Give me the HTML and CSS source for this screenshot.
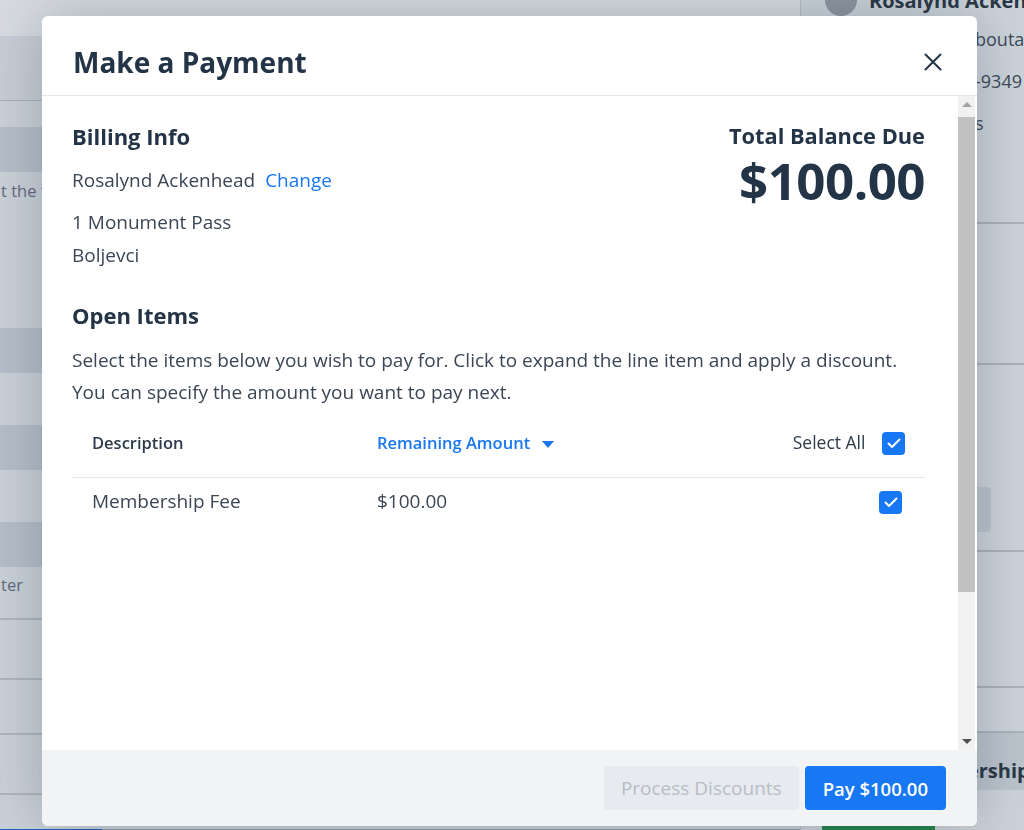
FILE: index.html
```html
<!DOCTYPE html>
<html>
    <head>
        <title>Make a Payment</title>
        <link rel="stylesheet" href="styles.css">
    </head>
    <body>
        <div class="page">
            <div class="main">
                <div class="topbar"></div>
                <div class="toolbar"></div>
                <div class="strip"></div>
                <div class="band"></div>
                <div class="notice">t the following fields before you continue</div>
                <div class="band"></div>
                <div class="strip tall"></div>
                <div class="band"></div>
                <div class="strip tall"></div>
                <div class="band"></div>
                <div class="notice short">ter</div>
                <div class="line-row"></div>
                <div class="line-row r2"></div>
                <div class="line-row r3"></div>
                <div class="line-row r4"></div>
                <div class="bottom-bar"><span class="blue-tab"></span></div>
            </div>
            <div class="sidebar">
                <div class="profile">
                    <span class="avatar"></span>
                    <span class="profile-name">Rosalynd Ackenhead</span>
                </div>
                <div class="side-line">boutads.com</div>
                <div class="side-line">-9349</div>
                <div class="side-line">s</div>
                <div class="side-gap"></div>
                <div class="side-section"></div>
                <div class="side-section s2"><span class="side-box"></span></div>
                <div class="side-section s3"></div>
                <div class="side-section s4"></div>
                <div class="side-title">Membership</div>
                <div class="side-foot"><span class="green-tab"></span></div>
            </div>
        </div>

        <div class="modal">
            <div class="modal-header">
                <h2>Make a Payment</h2>
                <span class="close">
                    <svg width="18" height="18" viewBox="0 0 18 18"><path d="M1.5 1.5 L16.5 16.5 M16.5 1.5 L1.5 16.5" stroke="#243447" stroke-width="2" stroke-linecap="round"/></svg>
                </span>
            </div>
            <div class="modal-body">
                <div class="scroll-content">
                    <div class="billing">
                        <div class="billing-info">
                            <h3>Billing Info</h3>
                            <p>Rosalynd Ackenhead <a class="link">Change</a></p>
                            <p>1 Monument Pass</p>
                            <p>Boljevci</p>
                        </div>
                        <div class="balance">
                            <h3>Total Balance Due</h3>
                            <div class="balance-amount">$100.00</div>
                        </div>
                    </div>
                    <h3 class="open-title">Open Items</h3>
                    <p class="hint">Select the items below you wish to pay for. Click to expand the line item and apply a discount.<br>You can specify the amount you want to pay next.</p>
                    <table class="items">
                        <thead>
                            <tr>
                                <th class="col-desc">Description</th>
                                <th class="col-amount sorted">Remaining Amount <span class="caret"></span></th>
                                <th class="col-check">Select All <span class="check"><svg width="14" height="11" viewBox="0 0 14 11"><path d="M1.5 5.5 L5 9 L12.5 1.5" fill="none" stroke="#fff" stroke-width="2" stroke-linecap="round" stroke-linejoin="round"/></svg></span></th>
                            </tr>
                        </thead>
                        <tbody>
                            <tr>
                                <td class="col-desc">Membership Fee</td>
                                <td class="col-amount">$100.00</td>
                                <td class="col-check"><span class="check"><svg width="14" height="11" viewBox="0 0 14 11"><path d="M1.5 5.5 L5 9 L12.5 1.5" fill="none" stroke="#fff" stroke-width="2" stroke-linecap="round" stroke-linejoin="round"/></svg></span></td>
                            </tr>
                        </tbody>
                    </table>
                </div>
                <div class="scrollbar">
                    <span class="arrow up"></span>
                    <span class="thumb"></span>
                    <span class="arrow down"></span>
                </div>
            </div>
            <div class="modal-footer">
                <button class="btn btn-muted">Process Discounts</button>
                <button class="btn btn-primary">Pay $100.00</button>
            </div>
        </div>
    </body>
</html>
```

FILE: styles.css
```css
body {
    margin: 0;
    overflow: hidden;
    font-family: "Open Sans", "Noto Sans", sans-serif;
    background: #c9d0d7;
}

/* page behind the dialog, already dimmed */
.page {
    display: flex;
    height: 830px;
}
.main {
    width: 800px;
    flex-shrink: 0;
    display: flex;
    flex-direction: column;
    background: #cbd1d8;
}
.topbar {
    height: 36px;
    background: #d8dce1;
}
.toolbar {
    height: 64px;
    background: #c8ced6;
    border-bottom: 1px solid #a9b1bb;
}
.strip {
    height: 26px;
}
.strip.tall {
    height: 52px;
}
.band {
    height: 45px;
    background: #b6bfc9;
}
.notice {
    height: 156px;
    padding: 7px 0 0 1px;
    box-sizing: border-box;
    font-size: 16.5px;
    color: #6a6580;
    white-space: nowrap;
}
.notice.short {
    height: 51px;
    padding-top: 6px;
    color: #5e6b7c;
}
.line-row {
    height: 58px;
    border-top: 2px solid #aeb6c0;
}
.line-row.r2 {
    height: 53px;
}
.line-row.r3 {
    height: 58px;
}
.line-row.r4 {
    height: 34px;
}
.bottom-bar {
    flex: 1;
    background: #9ba4ae;
}
.blue-tab {
    display: block;
    width: 102px;
    height: 100%;
    background: #1d60c2;
}

.sidebar {
    flex: 1;
    min-width: 0;
    overflow: hidden;
    display: flex;
    flex-direction: column;
    background: #cdd3da;
    border-left: 1px solid #b7bfc8;
    color: #3f4a58;
}
.profile {
    display: flex;
    align-items: center;
    gap: 12px;
    margin-top: -18px;
    padding-left: 24px;
    height: 36px;
    white-space: nowrap;
}
.avatar {
    flex-shrink: 0;
    width: 32px;
    height: 32px;
    border-radius: 50%;
    background: #8e97a2;
}
.profile-name {
    font-size: 20px;
    font-weight: 700;
    color: #2b3846;
}
.side-line {
    height: 42px;
    line-height: 42px;
    padding-left: 174px;
    font-size: 18px;
    white-space: nowrap;
}
.side-gap {
    height: 78px;
}
.side-section {
    height: 139px;
    border-top: 2px solid #aab2bc;
}
.side-section.s2 {
    height: 187px;
    display: flex;
    align-items: flex-end;
    padding: 0 0 18px 160px;
    box-sizing: border-box;
}
.side-box {
    width: 30px;
    height: 45px;
    border-radius: 4px;
    background: #bcc4cd;
}
.side-section.s3 {
    height: 134px;
}
.side-section.s4 {
    height: 43px;
}
.side-title {
    height: 59px;
    box-sizing: border-box;
    padding: 18px 0 0 103px;
    line-height: 40px;
    border-top: 2px solid #aab2bc;
    background: #bcc4cd;
    font-size: 20px;
    font-weight: 700;
    color: #2b3846;
    white-space: nowrap;
}
.side-foot {
    flex: 1;
    padding-left: 21px;
}
.green-tab {
    display: block;
    width: 113px;
    height: 100%;
    background: #23844e;
}

/* dialog */
.modal {
    position: fixed;
    left: 42px;
    top: 16px;
    width: 935px;
    height: 810px;
    display: flex;
    flex-direction: column;
    background: #fff;
    border-radius: 6px;
    overflow: hidden;
    box-shadow: 0 0 60px rgba(30, 45, 65, 0.28);
    color: #243447;
}
.modal-header {
    height: 67px;
    flex-shrink: 0;
    display: flex;
    align-items: center;
    justify-content: space-between;
    padding: 12px 35px 0 31px;
    border-bottom: 1px solid #e3e6ea;
}
.modal-header h2 {
    margin: 0;
    font-size: 28px;
    font-weight: 700;
}
.close {
    display: flex;
    cursor: pointer;
}

.modal-body {
    flex: 1;
    display: flex;
    min-height: 0;
}
.scroll-content {
    flex: 1;
    padding: 22px 33px 0 30px;
}
h3 {
    margin: 0;
    font-size: 22px;
    font-weight: 700;
    line-height: 36px;
}
.billing {
    display: flex;
    justify-content: space-between;
}
.billing-info h3 {
    margin-bottom: 10px;
}
.billing-info p {
    margin: 0;
    font-size: 19px;
    line-height: 33px;
    color: #3b4655;
}
.billing-info h3 + p {
    margin-bottom: 9px;
}
.link {
    margin-left: 5px;
    color: #1877f2;
    cursor: pointer;
}
.balance {
    text-align: right;
}
.balance h3 {
    font-size: 21.8px;
}
.balance-amount {
    font-size: 51px;
    font-weight: 700;
    line-height: 52px;
    letter-spacing: -0.5px;
}
.open-title {
    margin-top: 25px;
}
.hint {
    margin: 11px 0 0;
    font-size: 19px;
    line-height: 32px;
    color: #3b4655;
}

.items {
    width: 100%;
    border-collapse: collapse;
}
.items th {
    height: 69px;
    padding: 0 20px;
    text-align: left;
    font-size: 16.5px;
    font-weight: 600;
    color: #2c3a4a;
    border-bottom: 1px solid #e3e6ea;
}
.items td {
    height: 46px;
    padding: 0 20px;
    font-size: 19px;
    color: #3b4655;
}
.col-desc {
    width: 245px;
}
.items .sorted {
    color: #1877f2;
}
.caret {
    display: inline-block;
    margin-left: 8px;
    border-left: 6px solid transparent;
    border-right: 6px solid transparent;
    border-top: 7px solid #1877f2;
    vertical-align: middle;
}
.items .col-check {
    text-align: right;
}
.items th.col-check {
    padding-right: 20px;
    font-size: 17.5px;
    font-weight: 400;
}
.items td.col-check {
    padding-right: 23px;
}
.check {
    display: inline-flex;
    align-items: center;
    justify-content: center;
    width: 23px;
    height: 23px;
    margin-left: 12px;
    border-radius: 4px;
    background: #1877f2;
    vertical-align: middle;
}

/* classic scrollbar of the body */
.scrollbar {
    width: 17px;
    margin-right: 2px;
    display: flex;
    flex-direction: column;
    align-items: center;
    background: #f1f1f1;
}
.arrow {
    height: 17px;
    display: flex;
    align-items: center;
}
.arrow.up::before,
.arrow.down::before {
    content: "";
    border-left: 5px solid transparent;
    border-right: 5px solid transparent;
}
.arrow.up::before {
    border-bottom: 5px solid #a3a3a3;
}
.arrow.down::before {
    border-top: 5px solid #505050;
}
.thumb {
    width: 17px;
    height: 475px;
    margin-top: 4px;
    background: #c1c1c1;
}
.arrow.down {
    margin-top: auto;
}

.modal-footer {
    height: 76px;
    flex-shrink: 0;
    display: flex;
    align-items: center;
    justify-content: flex-end;
    gap: 6px;
    padding-right: 31px;
    background: #f2f3f5;
}
.btn {
    height: 44px;
    padding: 0 17px;
    border: none;
    border-radius: 4px;
    font-family: inherit;
    font-size: 19px;
}
.btn-muted {
    background: #e7eaee;
    color: #b7bec7;
}
.btn-primary {
    padding: 0 18px;
    background: #1877f2;
    color: #fff;
    font-size: 18.5px;
    font-weight: 600;
}
```
